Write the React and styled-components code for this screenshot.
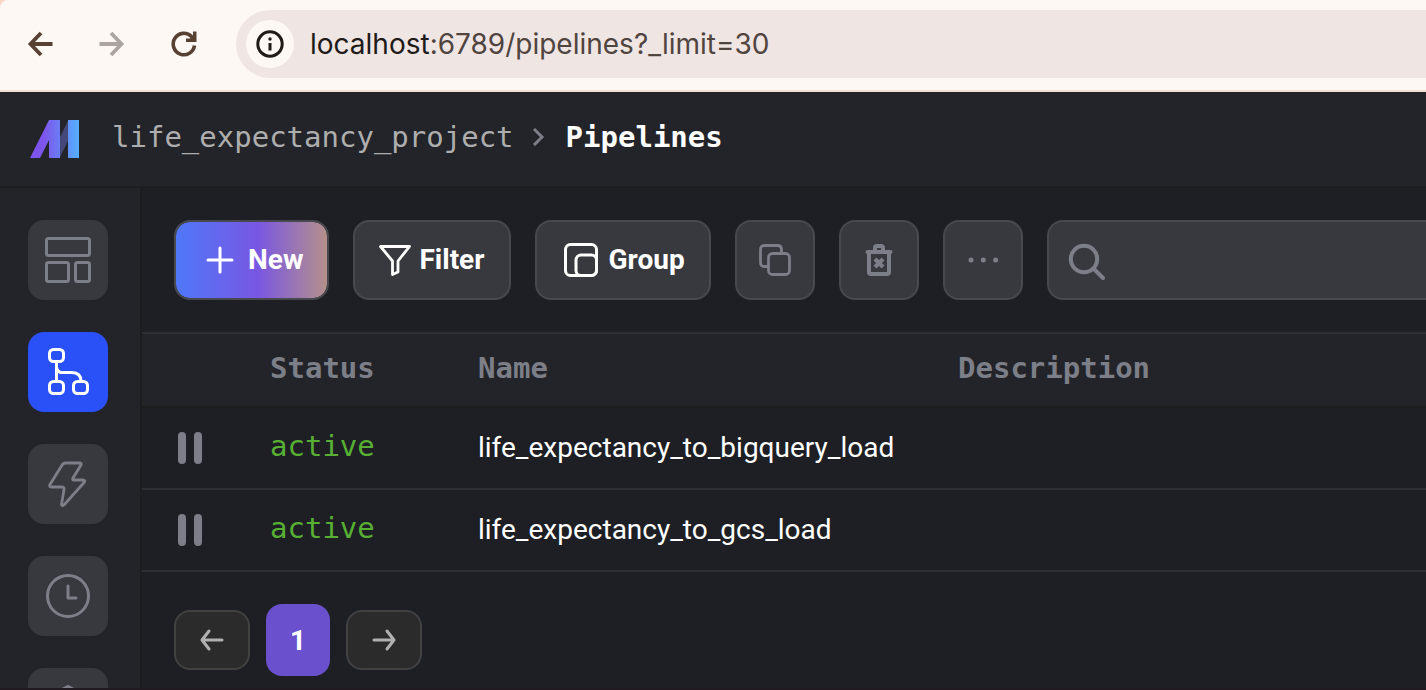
import React from "react";
import styled, { createGlobalStyle, css } from "styled-components";

const sans = 'Roboto, "Liberation Sans", sans-serif';
const mono = '"DejaVu Sans Mono", "Liberation Mono", monospace';
const muted = "#7d7f88";

const GlobalStyle = createGlobalStyle`
  *, *::before, *::after { box-sizing: border-box; }
  html, body { margin: 0; background: #1e1f24; }
  body { font-family: ${sans}; font-size: 28px; color: #fff; }
  button, input { font: inherit; color: inherit; margin: 0; }
  a { color: inherit; text-decoration: none; }
  svg { display: block; flex: none; }
`;

const Shell = styled.div`
  display: flex;
  flex-direction: column;
  height: 100vh;
  overflow: hidden;
  background: #f9d5c6;
  border-bottom: 2px solid #211a20;
`;

const BrowserBar = styled.div`
  display: flex;
  align-items: center;
  flex: none;
  height: 92px;
  padding: 10px 0 12px 24px;
  background: #fef8f4;
  border-bottom: 2px solid #f1dfd5;
  border-top-left-radius: 8px;
`;

const NavButton = styled.button`
  display: grid;
  place-items: center;
  flex: none;
  width: 32px;
  height: 32px;
  margin-right: 40px;
  padding: 0;
  border: 0;
  background: none;
  color: ${(p) => (p.$dim ? "#aca4a0" : "#574132")};
`;

const AddressBar = styled.div`
  display: flex;
  align-items: center;
  flex: 1;
  min-width: 0;
  height: 68px;
  margin-left: -4px;
  padding-left: 10px;
  gap: 16px;
  border-radius: 34px 0 0 34px;
  background: #efe5e3;
`;

const SiteInfo = styled.button`
  display: grid;
  place-items: center;
  flex: none;
  width: 48px;
  height: 48px;
  padding: 0;
  border: 0;
  border-radius: 50%;
  background: #fef8f4;
  color: #201a18;
`;

const Url = styled.a`
  font-family: Inter, "Liberation Sans", sans-serif;
  font-size: 28px;
  line-height: 32px;
  color: #50443f;
`;

const Host = styled.span`
  color: #201a18;
`;

const Header = styled.header`
  display: flex;
  align-items: center;
  flex: none;
  height: 96px;
  padding: 0 30px;
  background: #232429;
  border-bottom: 2px solid #1c1d1f;
`;

const Breadcrumbs = styled.nav`
  display: flex;
  align-items: center;
  gap: 18px;
  margin-left: 32px;
  padding-bottom: 4px;
  font-family: ${mono};
  font-size: 29px;
  line-height: 36px;
  color: #aeaeae;
`;

const Current = styled.span`
  font-weight: 700;
  color: #fff;
`;

const Body = styled.div`
  display: flex;
  flex: 1;
  min-height: 0;
  background: #1e1f24;
`;

const Sidebar = styled.nav`
  display: flex;
  flex-direction: column;
  flex: none;
  gap: 32px;
  width: 142px;
  padding: 32px 28px;
  overflow: hidden;
  background: #232429;
  border-right: 2px solid #1c1d1f;
`;

const SideLink = styled.a`
  display: grid;
  place-items: center;
  flex: none;
  width: 80px;
  height: 80px;
  border-radius: 16px;
  background: ${(p) => (p.$active ? "#2a51f8" : "#38393e")};
  color: ${(p) => (p.$active ? "#fff" : muted)};
`;

const Main = styled.main`
  flex: 1;
  min-width: 0;
  overflow: hidden;
`;

const Toolbar = styled.div`
  display: flex;
  gap: 24px;
  padding: 32px 0 32px 32px;
`;

const surface = css`
  height: 80px;
  border: 2px solid #48494e;
  border-radius: 16px;
  background: #38393e;
`;

const ToolButton = styled.button`
  ${surface}
  display: flex;
  align-items: center;
  justify-content: center;
  flex: none;
  gap: 8px;
  padding: 0 24px;
  font-weight: 700;
  line-height: 32px;
  color: #fff;
  ${(p) =>
    p.$primary &&
    css`
      background: linear-gradient(90deg, #4f78fa 0%, #7957e2 54%, #b5908c 100%) padding-box;
    `}
`;

const IconButton = styled.button`
  ${surface}
  display: grid;
  place-items: center;
  flex: none;
  width: 80px;
  padding: 0;
  color: ${muted};
`;

const SearchBox = styled.label`
  ${surface}
  display: flex;
  align-items: center;
  flex: 1;
  min-width: 0;
  gap: 16px;
  padding-left: 18px;
  border-right: 0;
  border-radius: 16px 0 0 16px;
  color: ${muted};
`;

const SearchInput = styled.input`
  flex: 1;
  min-width: 0;
  height: 100%;
  border: 0;
  outline: 0;
  background: none;
  color: #fff;
`;

const Table = styled.table`
  width: 100%;
  table-layout: fixed;
  border-collapse: separate;
  border-spacing: 0;
  border-top: 2px solid #2f3035;
`;

const Col = styled.col`
  width: ${(p) => (p.$width ? `${p.$width}px` : "auto")};
`;

const HeadCell = styled.th`
  height: 74px;
  padding: 0 16px 4px;
  text-align: left;
  font-family: ${mono};
  font-size: 29px;
  font-weight: 700;
  color: ${muted};
  background: #232429;
  border-bottom: 2px solid #1c1d1f;
`;

const Cell = styled.td`
  height: 82px;
  padding: 0 16px;
  line-height: 36px;
  border-bottom: 2px solid #2f3035;
`;

const PauseCell = styled(Cell)`
  padding-left: 36px;
`;

const StatusCell = styled(Cell)`
  padding-bottom: 4px;
  font-family: ${mono};
  font-size: 29px;
  color: #57b033;
`;

const PauseButton = styled.button`
  display: flex;
  gap: 8px;
  padding: 0;
  border: 0;
  background: none;

  &::before,
  &::after {
    content: "";
    width: 8px;
    height: 32px;
    border-radius: 4px;
    background: ${muted};
  }
`;

const Pagination = styled.nav`
  display: flex;
  align-items: center;
  gap: 16px;
  padding: 32px;
`;

const PageStep = styled.button`
  display: grid;
  place-items: center;
  width: 76px;
  height: 60px;
  padding: 0;
  border: 2px solid #414141;
  border-radius: 16px;
  background: #2b2b2b;
  color: #b0b0b0;
`;

const PageNumber = styled.button`
  width: 64px;
  height: 72px;
  padding: 0;
  border: 0;
  border-radius: 16px;
  background: #6a50cd;
  font-weight: 700;
`;

const Icon = ({ w = 48, h = w, sw = 3, children, ...rest }) => (
  <svg
    width={w}
    height={h}
    viewBox={`0 0 ${w} ${h}`}
    fill="none"
    stroke="currentColor"
    strokeWidth={sw}
    strokeLinecap="round"
    strokeLinejoin="round"
    aria-hidden="true"
    {...rest}
  >
    {children}
  </svg>
);

const Logo = () => (
  <svg width="50" height="38" viewBox="0 0 50 38" role="img" aria-label="Mage">
    <defs>
      <linearGradient id="mage" gradientUnits="userSpaceOnUse" x1="0" y1="0" x2="50" y2="0">
        <stop offset="0.28" stopColor="#7d55ec" />
        <stop offset="1" stopColor="#53b1fd" />
      </linearGradient>
    </defs>
    <path d="M30 17 L38 1 V21 L30 37 Z" fill="#464779" />
    <path d="M0 38 L19 0 H30 V38 H19 V20 L10 38 Z" fill="url(#mage)" />
    <path d="M38 0 H49 V38 H38 Z" fill="url(#mage)" />
  </svg>
);

const sideItems = [
  {
    label: "Overview",
    icon: (
      <Icon sw={3}>
        <rect x="2.5" y="2.5" width="43" height="17" rx="2" />
        <rect x="2.5" y="26.5" width="22" height="19" rx="2" />
        <rect x="31.5" y="26.5" width="14" height="19" rx="2" />
      </Icon>
    ),
  },
  {
    label: "Pipelines",
    active: true,
    icon: (
      <Icon>
        <rect x="5.5" y="1.5" width="14" height="12" rx="4" />
        <rect x="5.5" y="33.5" width="14" height="12" rx="4" />
        <rect x="29.5" y="33.5" width="14" height="12" rx="4" />
        <path d="M12.5 14 V33 M12.5 19 Q13 24.5 18 24.5 H28 Q37 25 37 33" />
      </Icon>
    ),
  },
  {
    label: "Triggers",
    icon: (
      <Icon sw={2.8}>
        <path d="M21.5 3 H36 Q38 3.2 37 5 L29 18 Q28 20 30 20 H39.5 Q41.5 20.5 40.5 22 L20 45 Q18 46.5 17.5 44.5 L20 29.5 Q20.5 27 18 27 H7 Q5 26.5 6 24.5 L17.5 6 Q19 3 21.5 3 Z" />
      </Icon>
    ),
  },
  {
    label: "Pipeline runs",
    icon: (
      <Icon>
        <circle cx="24" cy="24" r="20.5" />
        <path d="M24 14 V26 H32" />
      </Icon>
    ),
  },
  {
    label: "Global data products",
    icon: (
      <Icon sw={4}>
        <path d="M24 3 L43 13 V35 L24 45 L5 35 V13 Z" />
      </Icon>
    ),
  },
];

const pipelines = [
  { status: "active", name: "life_expectancy_to_bigquery_load" },
  { status: "active", name: "life_expectancy_to_gcs_load" },
];

export default function App() {
  return (
    <Shell>
      <GlobalStyle />
      <BrowserBar>
        <NavButton aria-label="Back">
          <Icon w={32} sw={3.8} strokeLinecap="butt" strokeLinejoin="miter">
            <path d="M28.5 16 H7 M17 5 L6.5 16 L17 27" />
          </Icon>
        </NavButton>
        <NavButton aria-label="Forward" $dim>
          <Icon w={32} sw={3.8} strokeLinecap="butt" strokeLinejoin="miter">
            <path d="M3.5 16 H25 M15 5 L25.5 16 L15 27" />
          </Icon>
        </NavButton>
        <NavButton aria-label="Reload">
          <Icon w={32} sw={3.6} strokeLinecap="butt" strokeLinejoin="miter">
            <path d="M26.5 17.5 A10.7 10.7 0 1 1 23.5 8.5 L26 11" />
            <path d="M28.5 3.5 V14 H18 V10.5 H22 L25 8 V3.5 Z" fill="currentColor" stroke="none" />
          </Icon>
        </NavButton>
        <AddressBar>
          <SiteInfo aria-label="Site information">
            <Icon w={28}>
              <circle cx="14" cy="14" r="12.2" />
              <path d="M14 13 V20.5" strokeLinecap="butt" />
              <circle cx="14" cy="9" r="1.7" fill="currentColor" stroke="none" />
            </Icon>
          </SiteInfo>
          <Url href="#">
            <Host>localhost</Host>:6789/pipelines?_limit=30
          </Url>
        </AddressBar>
      </BrowserBar>

      <Header>
        <Logo />
        <Breadcrumbs aria-label="Breadcrumb">
          <a href="#">life_expectancy_project</a>
          <Icon w={16} h={20} sw={3} stroke={muted} strokeLinecap="butt" strokeLinejoin="miter">
            <path d="M2 2 L10 10 L2 18" />
          </Icon>
          <Current>Pipelines</Current>
        </Breadcrumbs>
      </Header>

      <Body>
        <Sidebar aria-label="Main">
          {sideItems.map((item) => (
            <SideLink key={item.label} href="#" aria-label={item.label} $active={item.active}>
              {item.icon}
            </SideLink>
          ))}
        </Sidebar>

        <Main>
          <Toolbar>
            <ToolButton $primary>
              <Icon w={40}>
                <path d="M20 8 V32 M8 20 H32" />
              </Icon>
              New
            </ToolButton>
            <ToolButton>
              <Icon w={32} sw={2.8}>
                <path d="M1.5 2.5 H30.5 L19 17 V28 L13.5 30.5 V17 Z" />
              </Icon>
              Filter
            </ToolButton>
            <ToolButton>
              <Icon w={40}>
                <rect x="4.5" y="4.5" width="31" height="31" rx="5" />
                <rect x="15" y="15" width="20.5" height="20.5" rx="5" />
              </Icon>
              Group
            </ToolButton>
            <IconButton aria-label="Clone pipeline">
              <Icon w={32} sw={2.8}>
                <rect x="9.5" y="9.5" width="21" height="21" rx="4" />
                <path d="M9 22.5 H5.5 Q1.5 22.5 1.5 18.5 V5.5 Q1.5 1.5 5.5 1.5 H18.5 Q22.5 1.5 22.5 5.5 V9" />
              </Icon>
            </IconButton>
            <IconButton aria-label="Delete pipeline">
              <Icon w={32} sw={4} strokeLinejoin="miter">
                <path d="M4.5 8 H27.5" />
                <path d="M6 8 V28 Q6 30 8 30 H24 Q26 30 26 28 V8" />
                <path d="M12 7 V4 Q12 2 14 2 H18 Q20 2 20 4 V7" />
                <path d="M12 15 L20 23 M20 15 L12 23" strokeLinecap="butt" />
              </Icon>
            </IconButton>
            <IconButton aria-label="More actions">
              <Icon w={32} fill="currentColor" stroke="none">
                <circle cx="4" cy="16" r="2.5" />
                <circle cx="16.3" cy="16" r="2.5" />
                <circle cx="28.6" cy="16" r="2.5" />
              </Icon>
            </IconButton>
            <SearchBox>
              <Icon w={40} sw={4}>
                <circle cx="17" cy="19" r="13.2" />
                <path d="M26.5 28.5 L36 38" />
              </Icon>
              <SearchInput type="text" aria-label="Search pipelines" />
            </SearchBox>
          </Toolbar>

          <Table>
            <colgroup>
              <Col $width={112} />
              <Col $width={208} />
              <Col $width={480} />
              <Col />
            </colgroup>
            <thead>
              <tr>
                <HeadCell aria-label="Actions" />
                <HeadCell>Status</HeadCell>
                <HeadCell>Name</HeadCell>
                <HeadCell>Description</HeadCell>
              </tr>
            </thead>
            <tbody>
              {pipelines.map((p) => (
                <tr key={p.name}>
                  <PauseCell>
                    <PauseButton aria-label={`Pause ${p.name}`} />
                  </PauseCell>
                  <StatusCell>{p.status}</StatusCell>
                  <Cell>{p.name}</Cell>
                  <Cell />
                </tr>
              ))}
            </tbody>
          </Table>

          <Pagination aria-label="Pagination">
            <PageStep aria-label="Previous page">
              <Icon w={28}>
                <path d="M24 14 H4 M11 5 L4 14 L11 23" />
              </Icon>
            </PageStep>
            <PageNumber aria-current="page">1</PageNumber>
            <PageStep aria-label="Next page">
              <Icon w={28}>
                <path d="M4 14 H24 M17 5 L24 14 L17 23" />
              </Icon>
            </PageStep>
          </Pagination>
        </Main>
      </Body>
    </Shell>
  );
}
